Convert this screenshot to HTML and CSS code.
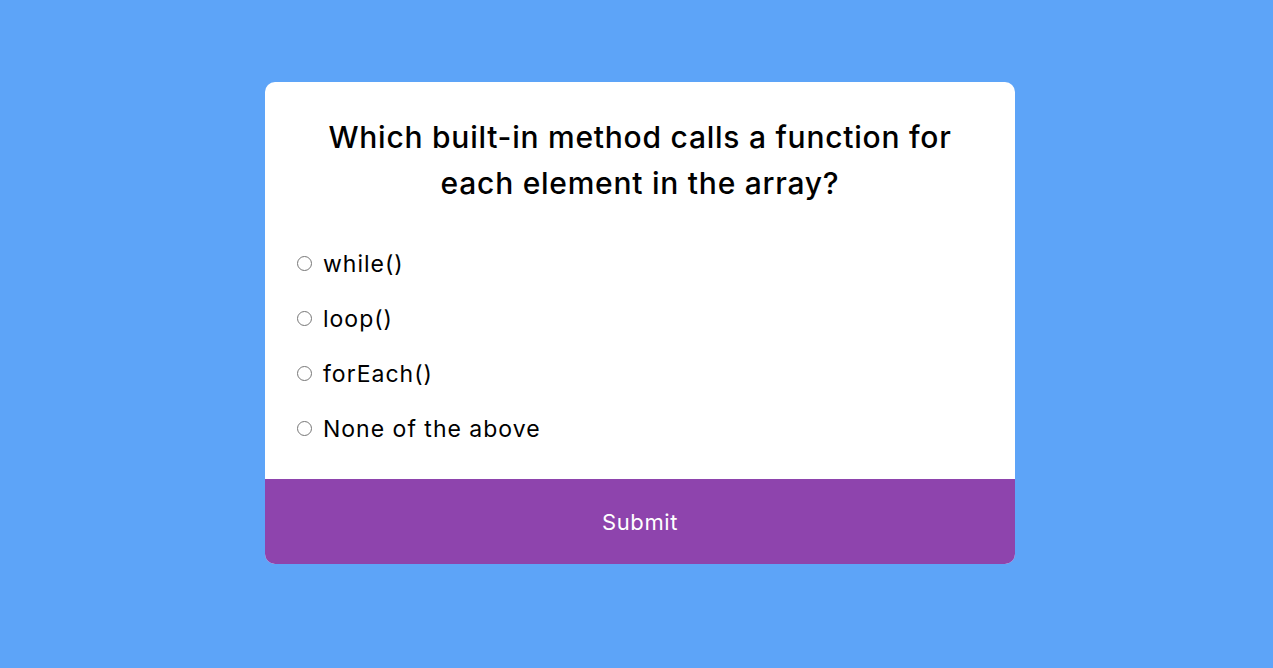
FILE: index.html
```html
<!DOCTYPE html>
<html lang="en">
<head>
<meta charset="utf-8">
<title>Quiz</title>
<link rel="stylesheet" href="styles.css">
</head>
<body>
<div class="quiz">
  <div class="quiz-header">
    <h2 class="question">Which built-in method calls a function for each element in the array?</h2>
    <ul class="answers">
      <li class="answer"><input type="radio" name="answer" id="a" class="radio"><label for="a">while()</label></li>
      <li class="answer"><input type="radio" name="answer" id="b" class="radio"><label for="b">loop()</label></li>
      <li class="answer"><input type="radio" name="answer" id="c" class="radio"><label for="c">forEach()</label></li>
      <li class="answer"><input type="radio" name="answer" id="d" class="radio"><label for="d">None of the above</label></li>
    </ul>
  </div>
  <button class="submit">Submit</button>
</div>
</body>
</html>
```
FILE: styles.css
```css
* { box-sizing: border-box; }
html, body { margin: 0; padding: 0; }
body {
  background: #5da4f8;
  font-family: "Inter", "Open Sans", sans-serif;
  min-height: 668px;
  display: flex;
  justify-content: center;
  padding-top: 82px;
  padding-left: 7px;
}
.quiz {
  width: 750px;
  height: 482px;
  background: #fff;
  border-radius: 10px;
  overflow: hidden;
  display: flex;
  flex-direction: column;
}
.quiz-header {
  padding: 32px 32px 0 32px;
  flex: 1;
}
.question {
  margin: 0;
  text-align: center;
  font-size: 30px;
  font-weight: 500;
  letter-spacing: 0.75px;
  line-height: 46px;
  color: #000;
  padding: 0 28px;
}
.answers {
  list-style: none;
  margin: 0;
  padding: 0;
  margin-top: 42px;
}
.answer {
  display: flex;
  align-items: center;
  height: 31px;
  margin-bottom: 24px;
  font-size: 23px;
  letter-spacing: 1px;
  color: #000;
}
.radio {
  margin: 0 11px 0 0;
  width: 15px;
  height: 15px;
}
.answer label { cursor: pointer; }
.submit {
  display: block;
  width: 100%;
  height: 85px;
  border: none;
  background: #8e44ad;
  color: #fff;
  font-family: inherit;
  font-size: 22px;
  letter-spacing: 0.6px;
  cursor: pointer;
}
```
